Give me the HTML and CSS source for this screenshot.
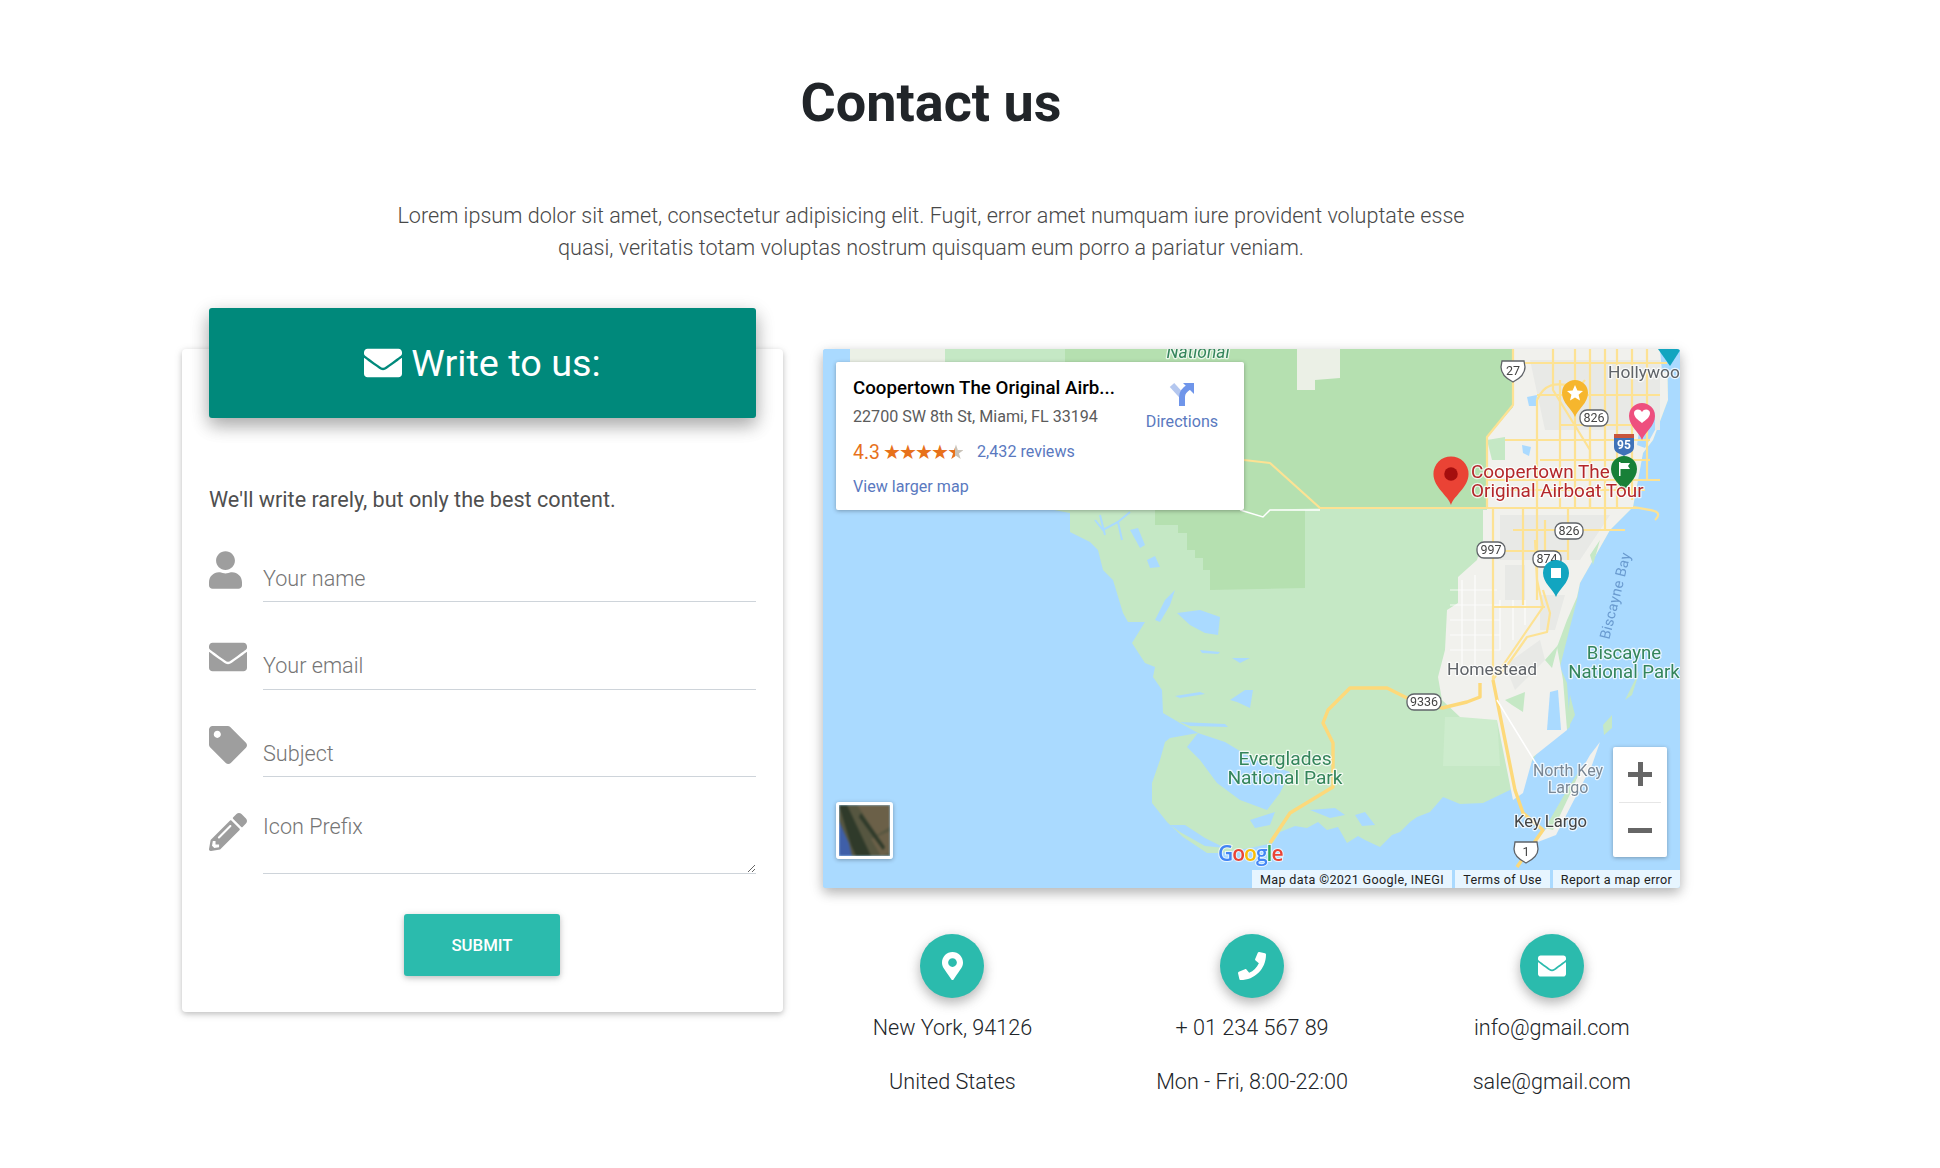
FILE: index.html
```html
<!DOCTYPE html>
<html lang="en">
<head>
<meta charset="utf-8">
<title>Contact us</title>
<link rel="stylesheet" href="styles.css">
</head>
<body>
<main class="page">
  <h2 class="title">Contact us</h2>
  <p class="lead">Lorem ipsum dolor sit amet, consectetur adipisicing elit. Fugit, error amet numquam iure provident voluptate esse<br>quasi, veritatis totam voluptas nostrum quisquam eum porro a pariatur veniam.</p>

  <div class="row">
    <section class="form-col">
      <div class="card">
        <div class="card-head">
          <svg class="head-icon" viewBox="0 0 512 512"><use href="#i-env"/></svg>
          <span>Write to us:</span>
        </div>
        <p class="card-note">We'll write rarely, but only the best content.</p>
        <form class="form">
          <div class="field">
            <svg class="field-icon user" viewBox="0 0 448 512"><use href="#i-user"/></svg>
            <input class="input" type="text" placeholder="Your name">
          </div>
          <div class="field">
            <svg class="field-icon" viewBox="0 0 512 512"><use href="#i-env"/></svg>
            <input class="input" type="text" placeholder="Your email">
          </div>
          <div class="field">
            <svg class="field-icon" viewBox="0 0 512 512"><use href="#i-tag"/></svg>
            <input class="input" type="text" placeholder="Subject">
          </div>
          <div class="field field-area">
            <svg class="field-icon" viewBox="0 0 512 512"><use href="#i-pen"/></svg>
            <textarea class="input area" placeholder="Icon Prefix"></textarea>
          </div>
          <div class="submit-wrap"><button class="submit" type="button">SUBMIT</button></div>
        </form>
      </div>
    </section>

    <section class="map-col">
      <div class="map">
        <svg class="map-svg" viewBox="823 349 857 539">
          <rect class="water" x="823" y="349" width="857" height="539"/>
          <!-- land -->
          <path class="land" d="M855 349 L855 370 L1000 500 L1070 513 L1070 532 L1090 542 L1098 550 L1103 570 L1113 580 L1123 613 L1128 622 L1145 622 L1132 643 L1145 663 L1155 667 L1153 677 L1162 690 L1163 713 L1180 723 L1198 733 L1170 738 L1165 742 L1160 760 L1152 783 L1152 803 L1167 822 L1183 837 L1207 853 L1220 853 L1250 848 L1273 843 L1280 832 L1295 826 L1307 828 L1318 822 L1327 830 L1338 827 L1347 843 L1358 836 L1365 840 L1380 847 L1392 835 L1400 832 L1410 822 L1417 817 L1430 812 L1443 797 L1460 804 L1483 803 L1510 790 L1518 780 L1527 770 L1537 753 L1570 727 L1567 683 L1560 667 L1570 627 L1577 600 L1580 583 L1610 530 L1633 507 L1643 453 L1653 440 L1668 400 L1667 349 Z"/>
          <!-- dark parks -->
          <path class="park" d="M945 349 H1513 V440 H1490 V508 H1320 L1270 510 H945 Z"/>
          <path class="park" d="M1155 510 V525 H1178 V533 H1187 V550 H1195 V558 H1203 V570 H1210 V590 L1305 588 V510 Z"/>
          <path class="pale" d="M850 349 H945 V365 H850Z M1297 349 H1340 V378 L1315 380 V390 H1297Z"/>
          <path class="land" d="M945 349 H1065 V370 H945Z"/>
          <path class="faint" d="M1445 717 H1497 L1500 766 H1443 Z"/>
          <!-- urban -->
          <path class="urban" d="M1513 349 V407 L1487 437 V510 H1483 V540 L1477 560 L1458 577 V603 L1447 610 L1445 650 L1438 677 L1442 700 L1460 717 L1497 720 L1513 800 L1523 793 L1533 757 L1567 730 L1563 680 L1557 647 L1567 620 L1577 597 L1580 583 L1610 530 L1633 507 L1643 453 L1653 440 L1668 400 L1667 349 Z"/>
          <path class="urban2" d="M1530 360 H1660 V430 H1545 Z M1500 515 H1610 L1580 560 H1500 Z M1505 565 H1525 V600 H1505 Z M1540 595 H1565 L1555 630 H1540 Z M1505 665 L1540 640 L1545 660 L1515 690 Z"/>
          <!-- green patches -->
          <path class="land" d="M1487 440 L1505 437 V460 H1492Z M1505 700 L1525 692 L1523 712 L1512 705Z M1545 660 L1558 645 L1552 668Z M1590 555 L1600 540 L1593 565Z M1567 730 L1575 715 L1570 695Z"/>
          <!-- water details -->
          <g class="water-detail">
            <path d="M1177 613 L1200 610 L1220 617 L1218 635 L1205 633 L1190 625 Z"/>
            <path d="M1230 700 L1245 690 L1253 690 L1250 708 L1237 702 Z"/>
            <path d="M1155 620 L1165 600 L1175 590 L1170 605 L1160 622 Z"/>
            <path d="M1147 560 L1155 556 L1160 567 L1150 568 Z"/>
            <path d="M1130 530 L1138 528 L1145 545 L1140 548 Z"/>
            <path d="M1187 747 L1198 733 L1225 742 L1255 760 L1290 772 L1280 793 L1267 810 L1240 800 L1217 783 L1200 760 Z"/>
            <path d="M1170 825 L1185 825 L1205 838 L1225 848 L1205 846 L1180 832 Z"/>
            <path d="M1250 820 L1275 812 L1270 825 L1255 828 Z"/>
            <path d="M1310 810 L1335 808 L1345 815 L1330 818 Z"/>
            <path d="M1355 815 L1365 812 L1375 825 L1362 826 Z"/>
            <path d="M1200 650 L1220 652 L1218 654 L1202 653Z"/>
            <path d="M1232 658 L1250 658 L1240 663Z"/>
            <path d="M1180 722 L1225 724 L1228 727 L1190 726 Z"/>
            <path d="M1175 696 L1200 692 L1205 694 L1180 698 Z"/>
            <path d="M1547 730 L1550 692 L1558 690 L1561 730 Z"/>
            <path d="M1527 397 L1537 395 L1536 406 L1529 406Z"/>
            <path d="M1522 445 L1531 447 L1529 456 L1523 453Z"/>
            <path d="M1640 425 L1655 412 L1655 430 L1645 448 L1637 445Z"/>
            <path d="M1660 349 H1668 V372 H1662Z"/>
          </g>
          <path class="channel" d="M1095 520 L1103 530 L1118 522 L1130 512 M1100 515 L1105 535 M1118 522 L1122 540"/>
          <!-- keys -->
          <path class="urban" d="M1530 845 L1550 825 L1590 755 L1600 742 L1592 765 L1556 835Z"/>
          <path class="land" d="M1545 828 L1570 785 L1580 770 L1572 790 L1553 830Z"/>
          <path class="land" d="M1603 725 L1612 715 L1612 728 L1604 735Z M1625 700 L1640 670 L1632 695Z"/>
          <!-- minor roads -->
          <g class="grid">
            <path d="M1450 605 H1500 M1450 620 H1500 M1450 635 H1500 M1450 650 H1500 M1450 590 H1497 M1462 580 V670 M1475 575 V670 M1500 600 V650 M1513 600 V640 M1525 600 V625"/>
          </g>
          <!-- roads -->
          <g class="road">
            <path d="M1244 460 L1270 463 L1320 508 H1640"/>
            <path d="M1513 349 V405 L1487 437 V508 M1493 508 V680"/>
            <path d="M1537 400 C1550 370 1575 395 1585 380 M1537 400 V508 M1553 349 V390 L1590 450 V508"/>
            <path d="M1523 508 V605 M1537 508 V600 M1568 508 V560"/>
            <path d="M1513 363 H1667 M1537 395 H1660 M1560 425 H1650 M1487 480 H1660 M1493 551 H1568 M1493 607 H1545 M1513 530 H1625 M1590 349 V508 M1617 349 V508 M1647 349 V480"/>
            <path d="M1505 440 H1650 M1540 460 H1650 M1560 380 V508 M1575 349 V508 M1605 349 V530 M1632 349 V500 M1510 490 H1645 M1545 520 V570"/>
            <path d="M1493 680 L1543 607 L1537 580 L1535 540"/>
            <path d="M1500 675 L1513 657 L1527 637 L1547 632 L1550 613 L1543 590"/>
            <path d="M1655 520 C1665 510 1650 510 1633 507" />
          </g>
          <g class="road major">
            <path d="M1493 680 L1515 790 L1523 813 L1543 830 L1517 867"/>
            <path d="M1480 683 V697 L1467 702 L1442 708 L1425 702 L1407 698 L1387 688 L1350 688 L1328 710 L1323 723 L1333 743 V787 L1290 813 L1270 843"/>
          </g>
          <path class="white-road" d="M1240 510 L1263 517 L1270 510 H1320 M1497 700 L1540 770"/>
          <!-- labels -->
          <text class="lbl park-lbl" x="1198" y="358" text-anchor="middle" font-style="italic">National</text>
          <text class="lbl town" x="1608" y="378">Hollywood</text>
          <text class="lbl town" x="1447" y="675">Homestead</text>
          <text class="lbl park-lbl pk2" text-anchor="middle"><tspan x="1624" y="659">Biscayne</tspan><tspan x="1624" y="678">National Park</tspan></text>
          <text class="lbl park-lbl pk3" text-anchor="middle"><tspan x="1285" y="765">Everglades</tspan><tspan x="1285" y="784">National Park</tspan></text>
          <text class="lbl small-town" text-anchor="middle"><tspan x="1568" y="776">North Key</tspan><tspan x="1568" y="793">Largo</tspan></text>
          <text class="lbl key" x="1514" y="827">Key Largo</text>
          <text class="bay" transform="translate(1620 597) rotate(-76)" text-anchor="middle">Biscayne Bay</text>
          <!-- shields -->
          <g class="shield">
            <g transform="translate(1513 371)"><path d="M-11 -10 H11 L12 -4 C12 4 6 8 0 11 C-6 8 -12 4 -12 -4Z"/><text y="4">27</text></g>
            <g transform="translate(1594 418)"><rect x="-14" y="-8" width="28" height="16" rx="7"/><text y="4">826</text></g>
            <g transform="translate(1569 531)"><rect x="-14" y="-8" width="28" height="16" rx="7"/><text y="4">826</text></g>
            <g transform="translate(1491 550)"><rect x="-14" y="-8" width="28" height="16" rx="7"/><text y="4">997</text></g>
            <g transform="translate(1547 559)"><rect x="-14" y="-8" width="28" height="16" rx="7"/><text y="4">874</text></g>
            <g transform="translate(1424 702)"><rect x="-17" y="-8" width="34" height="16" rx="7"/><text y="4">9336</text></g>
            <g transform="translate(1526 852)"><path d="M-11 -10 H11 L12 -3 C12 4 6 8 0 11 C-6 8 -12 4 -12 -3Z"/><text y="4">1</text></g>
          </g>
          <g transform="translate(1624 445)">
            <path class="i95-blue" d="M-10 -7 H10 V2 C10 8 3 9 0 11 C-3 9 -10 8 -10 2Z"/>
            <path class="i95-red" d="M-10 -11 H10 V-7 H-10Z"/>
            <text class="i95" y="4">95</text>
          </g>
          <!-- pins -->
          <path class="pin-teal" d="M1658 349 H1681 L1670 366Z"/>
          <g transform="translate(1575 393)"><path class="pin-yellow" d="M0 24 C-3 16 -13 10 -13 0 A13 13 0 1 1 13 0 C13 10 3 16 0 24Z"/><path class="pin-sym" d="M0 -8 L2.4 -2.6 L8 -2 L3.6 1.7 L5 7.4 L0 4.4 L-5 7.4 L-3.6 1.7 L-8 -2 L-2.4 -2.6Z"/></g>
          <g transform="translate(1642 416)"><path class="pin-pink" d="M0 24 C-3 16 -13 10 -13 0 A13 13 0 1 1 13 0 C13 10 3 16 0 24Z"/><path class="pin-sym" d="M0 7 C-4 4 -8 1 -8 -3 C-8 -7 -2 -8 0 -4 C2 -8 8 -7 8 -3 C8 1 4 4 0 7Z"/></g>
          <g transform="translate(1624 469)"><path class="pin-green" d="M0 22 C-3 16 -13 10 -13 0 A13 13 0 1 1 13 0 C13 10 3 16 0 22Z"/><path class="pin-sym" d="M-5 -7 H-3.5 V-6 H6 L4 -3 L6 0 H-3.5 V7 H-5Z"/></g>
          <g transform="translate(1556 573)"><path class="pin-teal2" d="M0 24 C-3 16 -13 10 -13 0 A13 13 0 1 1 13 0 C13 10 3 16 0 24Z"/><rect class="pin-sym" x="-5" y="-5" width="10" height="10"/></g>
          <text class="lbl place"><tspan x="1471" y="478">Coopertown The</tspan><tspan x="1471" y="497">Original Airboat Tour</tspan></text>
          <g transform="translate(1451 474) scale(1.35)"><path class="pin-red" d="M0 23 C-2 16 -13 10 -13 0 A13 13 0 1 1 13 0 C13 10 2 16 0 23Z"/><circle class="pin-dot" r="5"/></g>
          <!-- google logo -->
          <text class="google" x="1218" y="861"><tspan class="g-b">G</tspan><tspan class="g-r">o</tspan><tspan class="g-y">o</tspan><tspan class="g-b">g</tspan><tspan class="g-g">l</tspan><tspan class="g-r">e</tspan></text>
        </svg>

        <div class="info">
          <div class="info-main">
            <div class="info-title">Coopertown The Original Airb...</div>
            <div class="info-addr">22700 SW 8th St, Miami, FL 33194</div>
            <div class="info-rate"><span class="rate-num">4.3</span><span class="stars">★★★★<span class="half">★</span></span><span class="link rev">2,432 reviews</span></div>
            <div class="link larger">View larger map</div>
          </div>
          <div class="dir">
            <svg class="dir-icon" viewBox="0 0 26 26"><path class="dir-l" d="M3 4 L13 15"/><path class="dir-m" d="M13 25 V16 Q13 10 20 6"/><path class="dir-h" d="M14 2 H25 V13Z"/></svg>
            <div class="link">Directions</div>
          </div>
        </div>

        <div class="thumb">
          <svg viewBox="0 0 51 51"><rect class="sat" width="51" height="51"/><path class="sat-light" d="M18 0 H51 V22 L38 30 Z M32 34 L51 26 V48 L42 51Z"/><path class="sat-dark" d="M0 0 H8 L32 51 H17 L12 40Z M22 8 L46 42 L44 45 L20 12Z"/><path class="sat-blue" d="M0 16 L10 38 L13 51 H0Z"/></svg>
        </div>

        <div class="zoom">
          <button class="zoom-btn" type="button"><svg viewBox="0 0 24 24"><path d="M10 0h5v10h9v5h-9v10h-5v-10h-10v-5h10z"/></svg></button>
          <div class="zoom-sep"></div>
          <button class="zoom-btn" type="button"><svg viewBox="0 0 24 24"><path d="M0 10h24v5H0z"/></svg></button>
        </div>

        <div class="attrib">
          <span class="a-data">Map data ©2021 Google, INEGI</span>
          <span class="a-terms">Terms of Use</span>
          <span class="a-report">Report a map error</span>
        </div>
      </div>

      <div class="contacts">
        <div class="contact">
          <div class="badge"><svg class="pin-i" viewBox="0 0 384 512"><use href="#i-pin"/></svg></div>
          <p>New York, 94126</p>
          <p>United States</p>
        </div>
        <div class="contact">
          <div class="badge"><svg class="phone-i" viewBox="0 0 512 512"><use href="#i-phone"/></svg></div>
          <p>+ 01 234 567 89</p>
          <p>Mon - Fri, 8:00-22:00</p>
        </div>
        <div class="contact">
          <div class="badge"><svg class="env-i" viewBox="0 0 512 512"><use href="#i-env"/></svg></div>
          <p>info@gmail.com</p>
          <p>sale@gmail.com</p>
        </div>
      </div>
    </section>
  </div>
</main>

<svg class="defs" aria-hidden="true">
  <defs>
    <path id="i-env" d="M502.3 190.8c3.9-3.1 9.7-.2 9.7 4.7V400c0 26.5-21.5 48-48 48H48c-26.5 0-48-21.5-48-48V195.6c0-5 5.7-7.8 9.7-4.7 22.4 17.4 52.1 39.5 154.1 113.6 21.1 15.4 56.7 47.8 92.2 47.6 35.7.3 72-32.8 92.3-47.6 102-74.1 131.6-96.3 154-113.7zM256 320c23.2.4 56.6-29.2 73.4-41.4 132.7-96.3 142.8-104.7 173.4-128.7 5.8-4.5 9.2-11.5 9.2-18.9v-19c0-26.5-21.5-48-48-48H48C21.5 64 0 85.5 0 112v19c0 7.4 3.4 14.3 9.2 18.9 30.6 23.9 40.7 32.4 173.4 128.7 16.8 12.2 50.2 41.8 73.4 41.4z"/>
    <path id="i-user" d="M224 256c70.7 0 128-57.3 128-128S294.7 0 224 0 96 57.3 96 128s57.3 128 128 128zm89.6 32h-16.7c-22.2 10.2-46.9 16-72.9 16s-50.6-5.8-72.9-16h-16.7C60.2 288 0 348.2 0 422.4V464c0 26.5 21.5 48 48 48h352c26.5 0 48-21.5 48-48v-41.6c0-74.2-60.2-134.4-134.4-134.4z"/>
    <path id="i-tag" d="M0 252.118V48C0 21.49 21.49 0 48 0h204.118a48 48 0 0 1 33.941 14.059l211.882 211.882c18.745 18.745 18.745 49.137 0 67.882L293.823 497.941c-18.745 18.745-49.137 18.745-67.882 0L14.059 286.059A48 48 0 0 1 0 252.118zM112 64c-26.51 0-48 21.49-48 48s21.49 48 48 48 48-21.49 48-48-21.49-48-48-48z"/>
    <path id="i-pen" d="M497.9 142.1l-46.1 46.1c-4.7 4.7-12.3 4.7-17 0l-111-111c-4.7-4.7-4.7-12.3 0-17l46.1-46.1c18.7-18.7 49.1-18.7 67.9 0l60.1 60.1c18.8 18.7 18.8 49.1 0 67.9zM284.2 99.8L21.6 362.4.4 483.9c-2.9 16.4 11.4 30.6 27.8 27.8l121.5-21.3 262.6-262.6c4.7-4.7 4.7-12.3 0-17l-111-111c-4.8-4.7-12.4-4.7-17.1 0zM124.1 339.9c-5.5-5.5-5.5-14.3 0-19.8l154-154c5.5-5.5 14.3-5.5 19.8 0s5.5 14.3 0 19.8l-154 154c-5.5 5.5-14.3 5.5-19.8 0zM88 424h48v36.3l-64.5 11.3-31.1-31.1L51.7 376H88v48z"/>
    <path id="i-pin" d="M172.268 501.67C26.97 291.031 0 268.413 0 192 0 85.961 85.961 0 192 0s192 85.961 192 192c0 76.413-26.97 99.031-172.268 309.67-9.535 13.774-29.93 13.773-39.464 0zM192 272c44.183 0 80-35.817 80-80s-35.817-80-80-80-80 35.817-80 80 35.817 80 80 80z"/>
    <path id="i-phone" d="M493.4 24.6l-104-24c-11.3-2.6-22.9 3.3-27.5 13.9l-48 112c-4.2 9.8-1.4 21.3 6.9 28l60.6 49.6c-36 76.7-98.9 140.5-177.2 177.2l-49.6-60.6c-6.8-8.3-18.2-11.1-28-6.9l-112 48C3.9 366.5-2 378.1.6 389.4l24 104C27.1 504.2 36.7 512 48 512c256.1 0 464-207.5 464-464 0-11.2-7.7-20.9-18.6-23.4z"/>
  </defs>
</svg>
</body>
</html>
```
FILE: styles.css
```css
* { box-sizing: border-box; }
html, body { margin: 0; padding: 0; background: #fff; }
body { font-family: Roboto, "Liberation Sans", sans-serif; color: #212529; overflow: hidden; height: 1168px; }
.defs { position: absolute; width: 0; height: 0; }

.page { width: 1540px; margin-left: 161px; padding-top: 68px; }
.title { margin: 0; text-align: center; font-size: 54px; line-height: 70px; font-weight: 700; color: #212529; }
.lead { margin: 62px 0 0; text-align: center; font-size: 21.6px; line-height: 32px; font-weight: 300; color: #484848; }

.row { display: flex; margin-top: 44px; }
.form-col { width: 641px; padding: 0 19px 0 21px; }
.map-col { width: 899px; padding: 41px 21px 0; }

/* Card */
.card { display: flow-root; margin-top: 41px; height: 663px; padding: 0 27px; background: #fff; border-radius: 4px; box-shadow: 0 2px 5px rgba(0,0,0,.16), 0 2px 10px rgba(0,0,0,.12); }
.card-head { display: flex; align-items: center; justify-content: center; gap: 9px; height: 110px; margin-top: -41px; background: #00897b; color: #fff; border-radius: 3px; font-size: 37.8px; box-shadow: 0 8px 17px rgba(0,0,0,.2), 0 6px 20px rgba(0,0,0,.19); }
.head-icon { width: 38px; height: 38px; fill: #fff; }
.card-note { margin: 66px 0 0; font-size: 21.6px; line-height: 32px; color: #4f4f4f; font-weight: 400; }

.form { margin-top: 35px; display: flex; flex-direction: column; gap: 36px; }
.field { display: flex; height: 51.4px; }
.field-area { height: 61px; }
.field-icon { flex: none; width: 38px; height: 38px; fill: #9e9e9e; margin-right: 16px; }
.field-icon.user { width: 33px; margin-right: 21px; }
.input { flex: 1; min-width: 0; height: 47px; margin-top: 4.4px; padding: 0; border: 0; border-bottom: 1px solid #ced4da; outline: 0; background: transparent; font-family: Roboto, "Liberation Sans", sans-serif; font-size: 21.6px; font-weight: 300; color: #495057; }
.input::placeholder { color: #757575; opacity: 1; }
.area { height: 61px; margin-top: 0; line-height: 28px; resize: vertical; }
.submit-wrap { display: flex; justify-content: center; margin-top: 4px; padding-right: 1px; }
.submit { width: 156px; height: 62px; border: 0; border-radius: 3px; background: #2bbbad; color: #fff; font-family: Roboto, "Liberation Sans", sans-serif; font-size: 16.8px; font-weight: 500; box-shadow: 0 2px 5px rgba(0,0,0,.16), 0 2px 10px rgba(0,0,0,.12); }

/* Map */
.map { position: relative; width: 857px; height: 539px; overflow: hidden; border-radius: 3px; background: #aadaff; box-shadow: 0 5px 11px rgba(0,0,0,.18), 0 4px 15px rgba(0,0,0,.15); font-family: Roboto, "Liberation Sans", sans-serif; }
.map-svg { display: block; width: 857px; height: 539px; filter: blur(.4px); }
.water, .water-detail path { fill: #aadaff; }
.land { fill: #c5e8c5; }
.park { fill: #b5e0b0; }
.pale { fill: #ebf0e6; }
.faint { fill: #cdeccd; }
.urban { fill: #f1f1ed; }
.urban2 { fill: #e8e9e6; }
.channel { fill: none; stroke: #aadaff; stroke-width: 2; }
.grid path { fill: none; stroke: #fff; stroke-width: 1.2; opacity: .8; }
.road path { fill: none; stroke: #fde293; stroke-width: 2.2; stroke-linejoin: round; }
.road.major path { stroke: #fdd97a; stroke-width: 3.4; }
.white-road { fill: none; stroke: #fff; stroke-width: 1.5; }
.lbl { font-size: 17.4px; paint-order: stroke; stroke: #fff; stroke-width: 2.5px; stroke-linejoin: round; stroke-opacity: .75; }
.park-lbl { fill: #34855b; }
.pk2 { font-size: 18.6px; }
.pk3 { font-size: 19.2px; }
.town { fill: #5f6368; }
.small-town { fill: #7a8794; font-size: 16px; }
.key { fill: #444; font-size: 16.6px; }
.place { fill: #b3262a; font-size: 18.9px; }
.bay { font-size: 14.5px; fill: #6a9bd0; letter-spacing: .3px; }
.shield path, .shield rect { fill: #fff; stroke: #5f6368; stroke-width: 1.3; }
.shield text { font-size: 12.5px; fill: #444; text-anchor: middle; }
.i95-blue { fill: #3f72b8; }
.i95-red { fill: #c8553d; }
.i95 { font-size: 12px; font-weight: 700; fill: #fff; text-anchor: middle; }
.pin-teal { fill: #12a5c0; }
.pin-teal2 { fill: #12a5c0; }
.pin-yellow { fill: #f6b62d; }
.pin-pink { fill: #ee4f7e; }
.pin-green { fill: #188038; }
.pin-red { fill: #ea4335; }
.pin-dot { fill: #a50e0e; }
.pin-sym { fill: #fff; }
.google { font-family: "Open Sans", Roboto, sans-serif; font-size: 21px; font-weight: 600; letter-spacing: -1px; paint-order: stroke; stroke: #fff; stroke-width: 2px; stroke-opacity: .7; }
.g-b { fill: #4285f4; }
.g-r { fill: #ea4335; }
.g-y { fill: #fbbc05; }
.g-g { fill: #34a853; }

/* Map overlays */
.info { position: absolute; left: 13px; top: 13px; width: 408px; height: 148px; padding: 15px 17px; display: flex; justify-content: space-between; background: #fff; border-radius: 2px; box-shadow: 0 1px 4px rgba(0,0,0,.3); }
.info-title { font-size: 18.7px; line-height: 22px; font-weight: 500; color: #000; white-space: nowrap; }
.info-addr { margin-top: 8px; font-size: 16.1px; line-height: 20px; color: #5b5b5b; white-space: nowrap; }
.info-rate { display: flex; align-items: center; margin-top: 13px; height: 24px; white-space: nowrap; }
.rate-num { font-size: 19.4px; color: #e7711b; }
.stars { margin-left: 3px; font-family: "DejaVu Sans", sans-serif; font-size: 20px; letter-spacing: -1.9px; color: #e7711b; }
.half { background: linear-gradient(90deg, #e7711b 50%, #c9c2b8 50%); -webkit-background-clip: text; background-clip: text; color: transparent; }
.link { font-size: 16.1px; line-height: 20px; color: #5a79c0; white-space: nowrap; }
.rev { margin-left: 14px; }
.larger { margin-top: 13px; }
.dir { width: 80px; margin: 4px 5px 0 0; display: flex; flex-direction: column; align-items: center; }
.dir-icon { width: 26px; height: 26px; margin-bottom: 5px; }
.dir-l { fill: none; stroke: #b4c7ef; stroke-width: 6; }
.dir-m { fill: none; stroke: #6f95ea; stroke-width: 6; }
.dir-h { fill: #6f95ea; }

.thumb { position: absolute; left: 13px; top: 453px; width: 57px; height: 57px; border: 3px solid #fff; border-radius: 3px; overflow: hidden; box-shadow: 0 1px 4px rgba(0,0,0,.3); }
.thumb svg { display: block; width: 51px; height: 51px; filter: blur(.8px); }
.sat { fill: #565640; }
.sat-dark { fill: #2f3a2a; }
.sat-light { fill: #6b6048; }
.sat-blue { fill: #3f5fa8; }

.zoom { position: absolute; left: 790px; top: 398px; width: 54px; height: 110px; background: #fff; border-radius: 2px; box-shadow: 0 1px 4px rgba(0,0,0,.3); }
.zoom-btn { display: flex; align-items: center; justify-content: center; width: 54px; height: 54.5px; padding: 0; border: 0; background: transparent; }
.zoom-btn svg { width: 24px; height: 24px; fill: #666; }
.zoom-sep { height: 1px; margin: 0 6px; background: #e6e6e6; }

.attrib { position: absolute; right: 0; bottom: 0; display: flex; gap: 3px; height: 18px; font-size: 12.6px; line-height: 20px; color: #222; letter-spacing: .35px; white-space: nowrap; }
.attrib span { padding: 0; background: rgba(255,255,255,.72); text-align: center; }
.a-data { width: 200px; }
.a-terms { width: 95px; }
.a-report { width: 127px; }

/* Contacts */
.contacts { display: grid; grid-template-columns: repeat(3, 299.67px); margin: 46px -21px 0 -20.4px; }
.contact { text-align: center; }
.contact p { margin: 0; font-size: 21.6px; font-weight: 300; line-height: 32px; color: #212529; }
.contact p + p { margin-top: 22px; }
.badge { display: flex; align-items: center; justify-content: center; width: 64px; height: 64px; margin: 0 auto 14px; border-radius: 50%; background: #2bbbad; box-shadow: 0 5px 11px rgba(0,0,0,.18), 0 4px 15px rgba(0,0,0,.15); }
.badge svg { fill: #fff; }
.pin-i { width: 21px; height: 28px; }
.phone-i { width: 28px; height: 28px; }
.env-i { width: 28px; height: 28px; }
```
